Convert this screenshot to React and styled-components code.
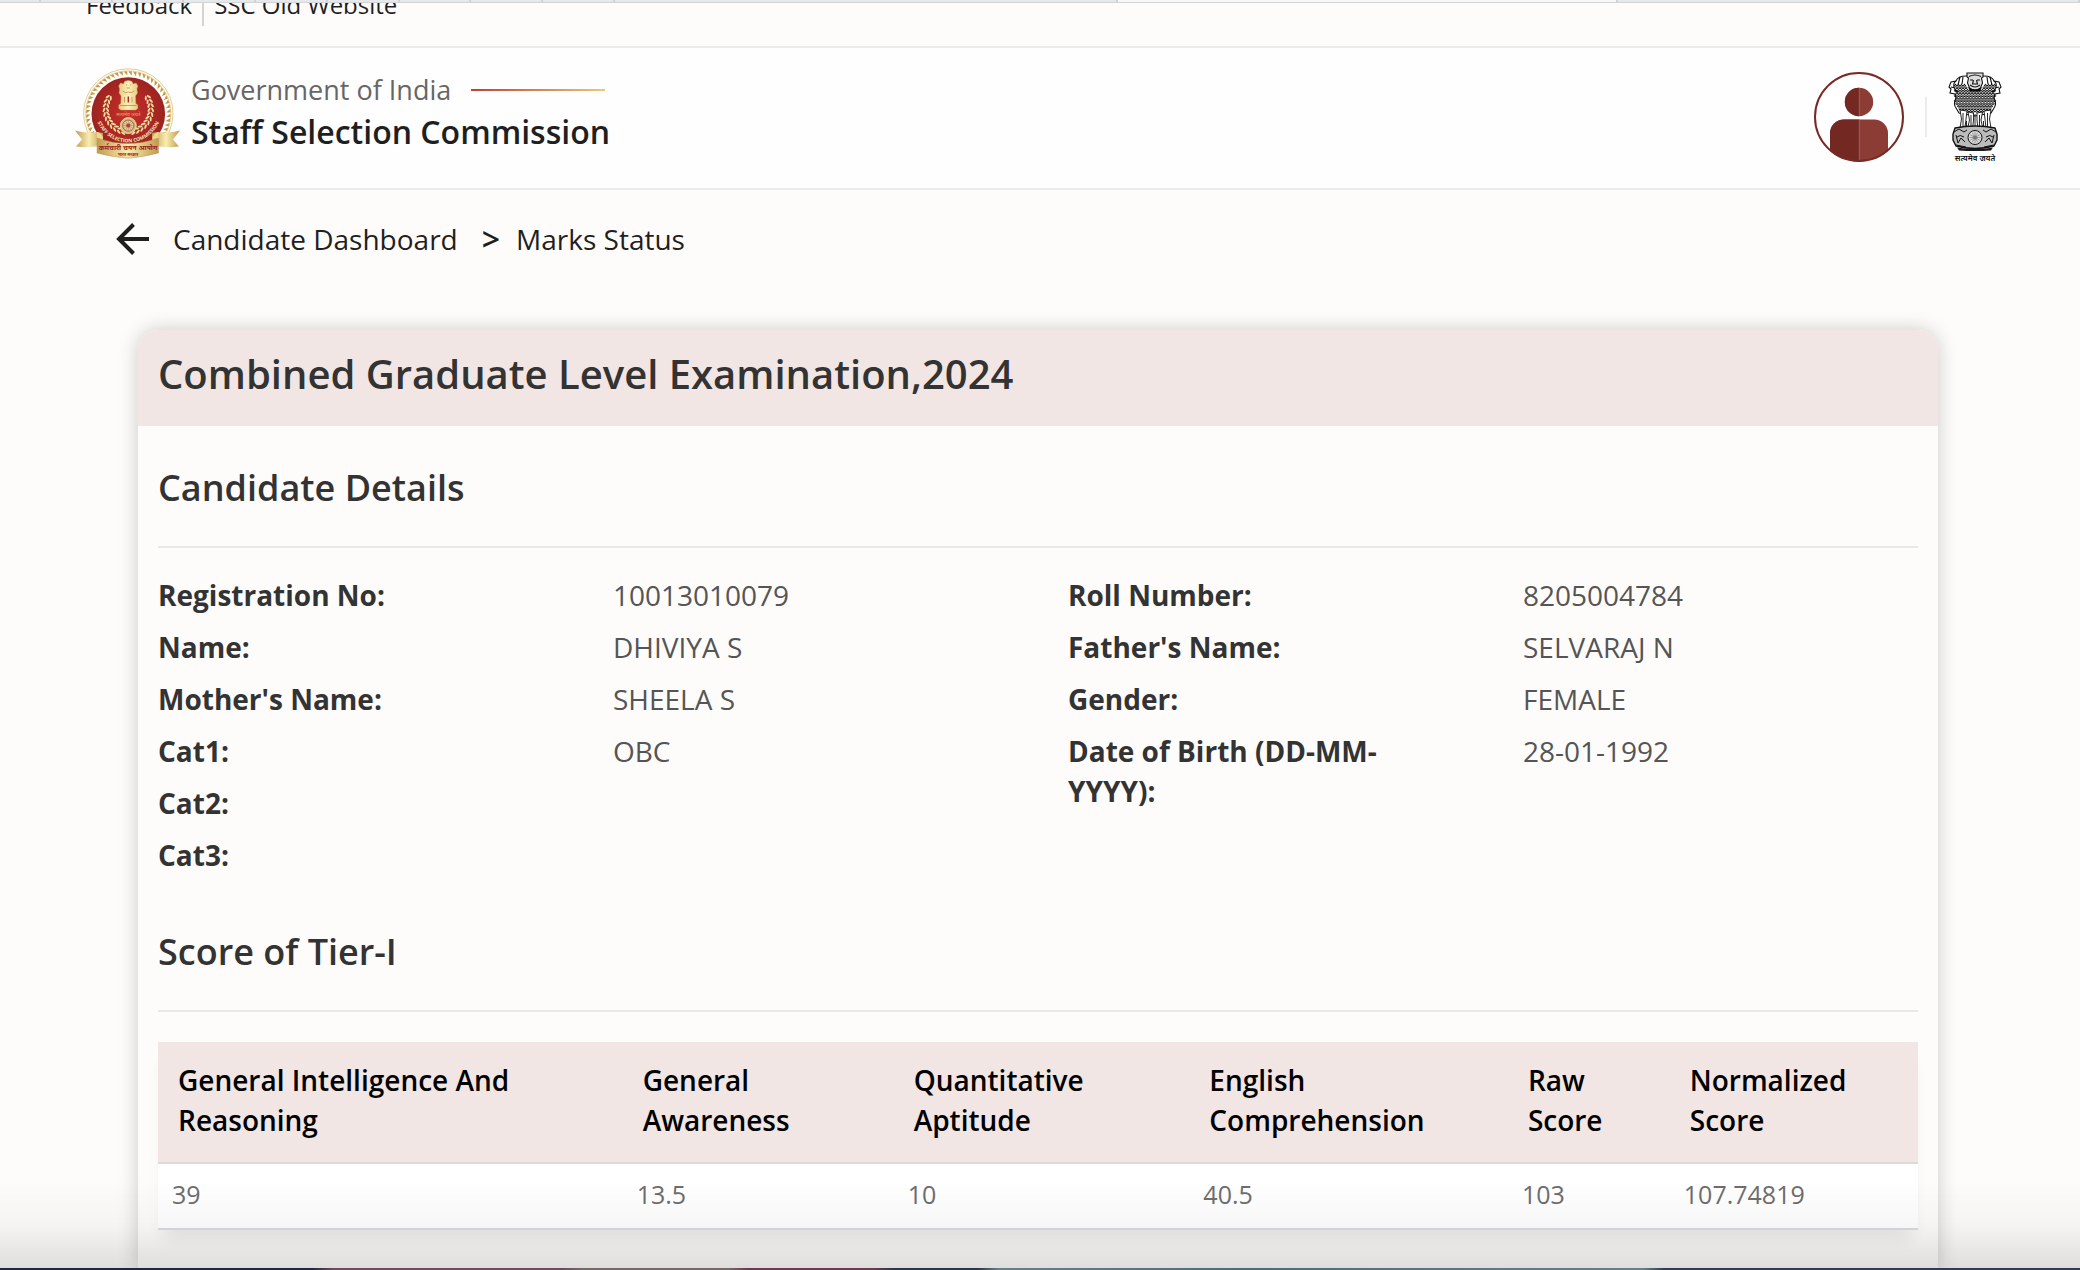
import React from "react";
import styled, { createGlobalStyle } from "styled-components";

const GlobalStyle = createGlobalStyle`
  *, *::before, *::after { box-sizing: border-box; }
  body {
    margin: 0;
    background: #fdfcfa;
    color: #1f1f1f;
    font-family: "Open Sans", "Noto Sans", sans-serif;
    font-size: 28px;
    line-height: 40px;
  }
`;

const Page = styled.div`
  display: flex;
  flex-direction: column;
  height: 100vh;
  overflow: hidden;
`;

const TabStrip = styled.div`
  position: fixed;
  top: 0;
  left: 0;
  right: 0;
  display: flex;
  height: 3px;
  border-bottom: 1px solid #d3d4d5;
`;

const TabEdge = styled.span`
  flex: ${(p) => p.$size} 1 0;
  border-right: 2px solid #d0d3d6;
  background: ${(p) => (p.$active ? "#f8f8f8" : "#e6e9ec")};
`;

const TopBar = styled.nav`
  display: flex;
  flex: none;
  align-items: flex-end;
  gap: 10px;
  height: 48px;
  padding: 0 86px 20px;
  overflow: hidden;
  border-bottom: 2px solid #ebebeb;
`;

const TopLink = styled.a`
  padding-bottom: 5px;
  color: #1f1f1f;
  font-size: 24px;
  line-height: 32px;
  text-decoration: none;
`;

const TopDivider = styled.span`
  align-self: flex-end;
  width: 2px;
  height: 38px;
  background: #d4d4d4;
`;

const Header = styled.header`
  display: flex;
  flex: none;
  justify-content: space-between;
  padding: 20px 78px 26px 75px;
  background: #fefefe;
  border-bottom: 2px solid #ebebeb;
`;

const Brand = styled.div`
  display: flex;
  gap: 11px;
`;

const BrandText = styled.div`
  display: flex;
  flex-direction: column;
`;

const Government = styled.span`
  display: flex;
  align-items: center;
  gap: 20px;
  color: #666;
  font-size: 27px;
  line-height: 44px;

  &::after {
    content: "";
    width: 134px;
    height: 2px;
    background: linear-gradient(90deg, #bf4034, #ecc777);
  }
`;

const Commission = styled.span`
  font-size: 32px;
  font-weight: 600;
  line-height: 40px;
`;

const HeaderActions = styled.div`
  display: flex;
  align-items: center;
  gap: 21px;
  height: 90px;
  margin-top: 4px;
`;

const IconButton = styled.button`
  display: flex;
  padding: 0;
  border: 0;
  background: none;
  color: inherit;
  cursor: pointer;
`;

const HeaderDivider = styled.span`
  width: 2px;
  height: 40px;
  background: #ebebeb;
`;

const Breadcrumb = styled.nav`
  display: flex;
  flex: none;
  align-items: center;
  padding: 29px 116px 71px;
`;

const Crumb = styled.a`
  margin-left: ${(p) => (p.$first ? 24 : 16)}px;
  color: #1f1f1f;
  text-decoration: none;
`;

const CrumbArrow = styled.span`
  margin-left: 24px;
  font-weight: 600;
  font-size: 32px;
`;

const Card = styled.main`
  flex: 1;
  margin: 0 142px 0 138px;
  border-radius: 20px 20px 0 0;
  background: #fdfcfb;
  box-shadow: 0 0 20px rgba(0, 0, 0, 0.2);
`;

const CardTitle = styled.h1`
  margin: 0;
  padding: 16px 20px 24px;
  border-radius: 20px 20px 0 0;
  background: #f1e6e4;
  color: #333;
  font-size: 40px;
  font-weight: 600;
  line-height: 56px;
`;

const CardBody = styled.div`
  padding: 38px 20px;
`;

const SectionTitle = styled.h2`
  margin: 0;
  padding-bottom: 34px;
  border-bottom: 2px solid #e8e8e7;
  color: #333;
  font-size: 36px;
  font-weight: 600;
  line-height: 48px;
`;

const Details = styled.div`
  display: grid;
  grid-template-columns: 1fr 1fr;
  column-gap: 60px;
  padding: 27px 0 53px;
`;

const DetailList = styled.dl`
  display: grid;
  grid-template-columns: 1fr 1fr;
  align-content: start;
  gap: 12px 60px;
  margin: 0;
`;

const Term = styled.dt`
  padding-right: 40px;
  color: #333;
  font-weight: 700;
`;

const Value = styled.dd`
  margin: 0;
  color: #555;
`;

const ScoreTable = styled.table`
  width: 100%;
  margin-top: 30px;
  table-layout: fixed;
  border-spacing: 0;
  background: #fff;
  box-shadow: 0 16px 16px -6px rgba(20, 0, 10, 0.07);
`;

const ScoreColumn = styled.col`
  width: ${(p) => p.$share}%;
`;

const HeadCell = styled.th`
  padding: 18px 20px 22px;
  border-bottom: 2px solid #dcdbdc;
  background: #f1e6e4;
  color: #000;
  font-size: 28px;
  font-weight: 600;
  text-align: left;
  vertical-align: top;
`;

const ScoreCell = styled.td`
  padding: 10px 14px 14px;
  border-bottom: 2px solid #d9dce0;
  color: #6e6e6e;
  font-size: 25px;
`;

const BottomShade = styled.div`
  position: fixed;
  left: 0;
  right: 0;
  bottom: 0;
  height: 90px;
  background: linear-gradient(rgba(0, 0, 0, 0), rgba(0, 0, 0, 0.03) 50%, rgba(0, 0, 0, 0.12));
  pointer-events: none;

  &::after {
    content: "";
    position: absolute;
    left: 0;
    right: 0;
    bottom: 0;
    height: 2px;
    background: linear-gradient(90deg, #1d2840 15%, #704860 16%, #704860 27%, #766a68 28%, #766a68 35%, #6a3a52 36%, #6a3a52 42%, #2a364a 43%, #2a364a 47%, #66808a 48%, #4f6b78 60%, #66808a 79%, #2c3e54 80%);
  }
`;

const polar = (cx, cy, r, deg) => [cx + r * Math.cos((deg * Math.PI) / 180), cy + r * Math.sin((deg * Math.PI) / 180)];
const range = (n) => Array.from({ length: n }, (_, i) => i);

function CommissionLogo() {
  return (
    <svg width="105" height="91" viewBox="0 0 105 91" role="img" aria-label="Staff Selection Commission logo">
      <defs>
        <linearGradient id="gold" x1="0" x2="1">
          <stop offset="0" stopColor="#c39a50" />
          <stop offset="0.5" stopColor="#f8edb0" />
          <stop offset="1" stopColor="#c39a50" />
        </linearGradient>
        <linearGradient id="lions" x1="0" x2="1">
          <stop offset="0" stopColor="#e6cc84" />
          <stop offset="0.5" stopColor="#fbf0b8" />
          <stop offset="1" stopColor="#e6cc84" />
        </linearGradient>
        <radialGradient id="red">
          <stop offset="0" stopColor="#c9302b" />
          <stop offset="1" stopColor="#9c2320" />
        </radialGradient>
        <path id="motto" d="M19.8 41 A33.5 33.5 0 1 0 86.8 41" />
      </defs>
      <circle cx="53.3" cy="45.5" r="44.7" fill="#fffefa" stroke="#d6b566" strokeWidth="0.7" />
      <circle cx="53.3" cy="45.5" r="42.8" fill="none" stroke="#d6b566" strokeWidth="0.5" />
      {range(56).map((i) => {
        const a = (i * 360) / 56;
        const p = [polar(53.3, 45.5, 42.3, a), polar(53.3, 45.5, 42.3, a + 5), polar(53.3, 45.5, 38, a + 5)];
        return <polygon key={i} points={p.map((q) => q.join(",")).join(" ")} fill="#c39a45" />;
      })}
      <circle cx="53.3" cy="46" r="36.8" fill="url(#red)" />
      {[-1, 1].map((side) =>
        range(11).map((i) => {
          const a = 100 + i * 11;
          const [x, y] = polar(0, 41.5, 22.5, a);
          return (
            <g key={`${side}${i}`} fill="#f0dca0" transform={`translate(53.3 0) scale(${side} 1) translate(${x} ${y}) rotate(${a + 90})`}>
              <ellipse cx="0" cy="-2" rx="2.5" ry="1" transform="rotate(28)" />
              <ellipse cx="0" cy="2" rx="2.5" ry="1" transform="rotate(-28)" />
            </g>
          );
        })
      )}
      <path d="M49.5 13.5q3.8-2 7.6 0l1 2.5 3-1 1.8 3-1 3 .6 4-2 3 .3 7.5 2 1.5v3.5l-2 1.5H45.8l-2-1.5V37l2-1.5.3-7.5-2-3 .6-4-1-3 1.8-3 3 1Z" fill="url(#lions)" stroke="#c9a552" strokeWidth="0.4" />
      <g stroke="#b5652f" strokeWidth="0.6" fill="none">
        <path d="M49.5 29v5.500M57 29v5.500M47.500 23q3 3 5.800 1q2.800 2 5.800-1" />
        <path d="M51 17h1M55 17h1M51.500 20h3.500M45 37.500h16.500" />
      </g>
      <path d="M53.300 28.500v6" stroke="#a82722" strokeWidth="1.400" />
      <text x="53.3" y="48" fontSize="5" textAnchor="middle" fill="#e8a868">सत्यमेव जयते</text>
      <circle cx="53.3" cy="57.6" r="8" fill="#d8bf86" stroke="#f0dca0" strokeWidth="0.8" />
      <circle cx="53.3" cy="57.6" r="5.6" fill="#e6d4a0" stroke="#9c4a35" strokeWidth="0.8" />
      {range(12).map((i) => {
        const [x, y] = polar(53.3, 57.6, 5.4, i * 30);
        return <path key={i} d={`M53.3 57.6L${x} ${y}`} stroke="#9c4a35" strokeWidth="0.4" />;
      })}
      <circle cx="53.3" cy="57.6" r="2" fill="#a34a38" />
      <text fontSize="5" fontWeight="700" fill="#f6e6b4">
        <textPath href="#motto" startOffset="50%" textAnchor="middle">STAFF SELECTION COMMISSION</textPath>
      </text>
      <path d="M0 62.500q10 3 22 1.500l6 1v13l-8 .5q-10 1.500-19 0l6-7Z" fill="url(#gold)" />
      <path d="M105 62.500q-10 3-22 1.500l-6 1v13l8 .5q10 1.500 19 0l-6-7Z" fill="url(#gold)" />
      <path d="M22 64q4 1 6 5v4l-6 2ZM83.500 64q-4 1-6 5v4l6 2Z" fill="#ecd890" />
      <path d="M22 70q31 11 61.500 0v15q-31 9-61.500 0Z" fill="url(#gold)" stroke="#b48e46" strokeWidth="0.4" />
      <text x="53" y="82" fontSize="7" fontWeight="700" textAnchor="middle" fill="#9b1f1c">कर्मचारी चयन आयोग</text>
      <text x="53" y="88" fontSize="4" fontWeight="700" textAnchor="middle" fill="#9b1f1c">भारत सरकार</text>
    </svg>
  );
}

function AvatarIcon() {
  return (
    <svg width="90" height="90" viewBox="0 0 90 90" aria-hidden="true">
      <defs>
        <clipPath id="disc"><circle cx="45" cy="45" r="44.5" /></clipPath>
        <clipPath id="leftHalf"><rect width="45" height="90" /></clipPath>
      </defs>
      <circle cx="45" cy="45" r="44" fill="#fff" />
      <g clipPath="url(#disc)" fill="#8c3b35">
        <circle cx="45" cy="30" r="14.2" />
        <rect x="16" y="47.5" width="58" height="60" rx="14" />
      </g>
      <g clipPath="url(#leftHalf)">
        <g clipPath="url(#disc)" fill="#732822">
          <circle cx="45" cy="30" r="14.2" />
          <rect x="16" y="47.5" width="58" height="60" rx="14" />
        </g>
      </g>
      <path d="M45.300 16v28M45.300 47.500v42" stroke="#a8645e" strokeWidth="0.8" />
      <circle cx="45" cy="45" r="44" fill="none" stroke="#782a24" strokeWidth="2" />
    </svg>
  );
}

const MANE = range(11).flatMap((row) =>
  range(14).map((col) => [7.5 + col * 3 + (row % 2) * 1.5, 14 + row * 2.6])
).filter(([x, y]) => Math.abs(x - 27) < 20.5 - Math.max(0, y - 30) * 0.5 && !(Math.abs(x - 27) < 8 && y < 19));

function StateEmblem() {
  return (
    <svg width="54" height="92" viewBox="0 0 54 92" role="img" aria-label="State Emblem of India">
      <g fill="#fff" stroke="#111" strokeWidth="1.1">
        <path d="M18 5q-8 0-10 5l-5 1-2 5 2 2-1 4 5 1 1 4q-3 6 0 10l3 5 5 1 11 2 11-2 5-1 3-5q3-4 0-10l1-4 5-1-1-4 2-2-2-5-5-1q-2-5-10-5Z" />
        <path d="M8 10q-3 2-2 6t4 5M46 10q3 2 2 6t-4 5M3 16l4 1M51 16l-4 1M12 6l-2 8M42 6l2 8M15 6l-1 7M39 6l1 7" fill="none" />
      </g>
      {MANE.map(([x, y], i) => (
        <path key={i} d={`M${x - 1.3} ${y}q1.3 2.4 2.6 0M${x - 0.6} ${y - 0.8}l1.200 .4`} fill="none" stroke="#0c0c0c" strokeWidth="1.1" />
      ))}
      <g fill="#ddd" stroke="#111" strokeWidth="1.1">
        <path d="M19 2h16v4l-1.500 1 1 5-2 5q-5.500 4-11 0l-2-5 1-5L19 6Z" />
        <path d="M21 5.500q6-3 12 0M22 9h3M29 9h3M25.500 9l-1 4h5l-1-4M22 14q5 4 10 0" fill="none" />
      </g>
      <path d="M20 16q7 5 14 0l-2 4.500H22Z" fill="#0c0c0c" />
      <g fill="#fff" stroke="#111" strokeWidth="0.9">
        <path d="M12 39l1.500 9-1.500 9h5l1-9 1-8ZM20 41l1.500 8-2 9h5l1-9v-7ZM29 42v7l1 9h5l-2-9 1.500-8ZM36 40l1 8 1 9h5l-1.500-9 1.500-9Z" />
        <path d="M15 42v14M23 44v12M31.500 44v12M39.500 42v14M27 43v14M18.500 50v7M35.500 50v7" fill="none" />
      </g>
      <path d="M7 57q20-4 40 0l2 6v6l-3 6q-19 5-38 0l-3-6v-6Z" fill="#bbb" stroke="#111" strokeWidth="1.4" />
      <g fill="none" stroke="#111" strokeWidth="1">
        <path d="M6 61l5-3 5 3 3-2M48 61l-5-3-5 3-3-2M8 64l2 8 3-5 4 4M46 64l-2 8-3-5-4 4M9 66q3-3 7 0M45 66q-3-3-7 0M8 74l10 2M46 74l-10 2" />
      </g>
      <circle cx="27" cy="66.5" r="7" fill="#ddd" stroke="#111" strokeWidth="1" />
      {range(12).map((i) => {
        const [x, y] = polar(27, 66.5, 5.6, i * 30);
        return <path key={i} d={`M27 66.5L${x} ${y}`} stroke="#666" strokeWidth="0.6" />;
      })}
      <circle cx="27" cy="66.5" r="2" fill="#777" />
      <path d="M9 76.500q18 3 36 0l-2 3q-16 1-32 0Z" fill="#1a1a1a" />
      <text x="27" y="90" fontSize="8" fontWeight="600" textAnchor="middle" fill="#111">सत्यमेव जयते</text>
    </svg>
  );
}

const TABS = [39, 70, 70, 70, 70, 70, 70, 70, 70, 503, 500, 462];

const PERSONAL = [
  ["Registration No:", "10013010079"],
  ["Name:", "DHIVIYA S"],
  ["Mother's Name:", "SHEELA S"],
  ["Cat1:", "OBC"],
  ["Cat2:", ""],
  ["Cat3:", ""],
];

const IDENTITY = [
  ["Roll Number:", "8205004784"],
  ["Father's Name:", "SELVARAJ N"],
  ["Gender:", "FEMALE"],
  ["Date of Birth (DD-MM-YYYY):", "28-01-1992"],
];

const SCORES = [
  { share: 26.4, label: ["General Intelligence And", "Reasoning"], value: "39" },
  { share: 15.4, label: ["General", "Awareness"], value: "13.5" },
  { share: 16.8, label: ["Quantitative", "Aptitude"], value: "10" },
  { share: 18.1, label: ["English", "Comprehension"], value: "40.5" },
  { share: 9.2, label: ["Raw", "Score"], value: "103" },
  { share: 14.1, label: ["Normalized", "Score"], value: "107.74819" },
];

function DetailColumn({ items }) {
  return (
    <DetailList>
      {items.map(([term, value]) => (
        <React.Fragment key={term}>
          <Term>{term}</Term>
          <Value>{value}</Value>
        </React.Fragment>
      ))}
    </DetailList>
  );
}

export default function App() {
  return (
    <Page>
      <GlobalStyle />
      <TopBar>
        <TopLink href="#feedback">Feedback</TopLink>
        <TopDivider />
        <TopLink href="#old-site">SSC Old Website</TopLink>
      </TopBar>
      <TabStrip>
        {TABS.map((size, i) => (
          <TabEdge key={i} $size={size} $active={i === 10} />
        ))}
      </TabStrip>

      <Header>
        <Brand>
          <CommissionLogo />
          <BrandText>
            <Government>Government of India</Government>
            <Commission>Staff Selection Commission</Commission>
          </BrandText>
        </Brand>
        <HeaderActions>
          <IconButton type="button" aria-label="Profile"><AvatarIcon /></IconButton>
          <HeaderDivider />
          <StateEmblem />
        </HeaderActions>
      </Header>

      <Breadcrumb aria-label="Breadcrumb">
        <IconButton type="button" aria-label="Back">
          <svg width="33" height="32" viewBox="0 0 33 32" fill="none" stroke="#1f1f1f" strokeWidth="4" aria-hidden="true">
            <path d="M33 16H3M17.500 1.500L3 16l14.500 14.500" />
          </svg>
        </IconButton>
        <Crumb href="#dashboard" $first>Candidate Dashboard</Crumb>
        <CrumbArrow>&gt;</CrumbArrow>
        <Crumb href="#marks">Marks Status</Crumb>
      </Breadcrumb>

      <Card>
        <CardTitle>Combined Graduate Level Examination,2024</CardTitle>
        <CardBody>
          <SectionTitle>Candidate Details</SectionTitle>
          <Details>
            <DetailColumn items={PERSONAL} />
            <DetailColumn items={IDENTITY} />
          </Details>
          <SectionTitle>Score of Tier-I</SectionTitle>
          <ScoreTable>
            <colgroup>
              {SCORES.map((s) => <ScoreColumn key={s.value} $share={s.share} />)}
            </colgroup>
            <thead>
              <tr>
                {SCORES.map((s) => (
                  <HeadCell key={s.value} scope="col">{s.label[0]}<br />{s.label[1]}</HeadCell>
                ))}
              </tr>
            </thead>
            <tbody>
              <tr>
                {SCORES.map((s) => <ScoreCell key={s.value}>{s.value}</ScoreCell>)}
              </tr>
            </tbody>
          </ScoreTable>
        </CardBody>
      </Card>
      <BottomShade />
    </Page>
  );
}
